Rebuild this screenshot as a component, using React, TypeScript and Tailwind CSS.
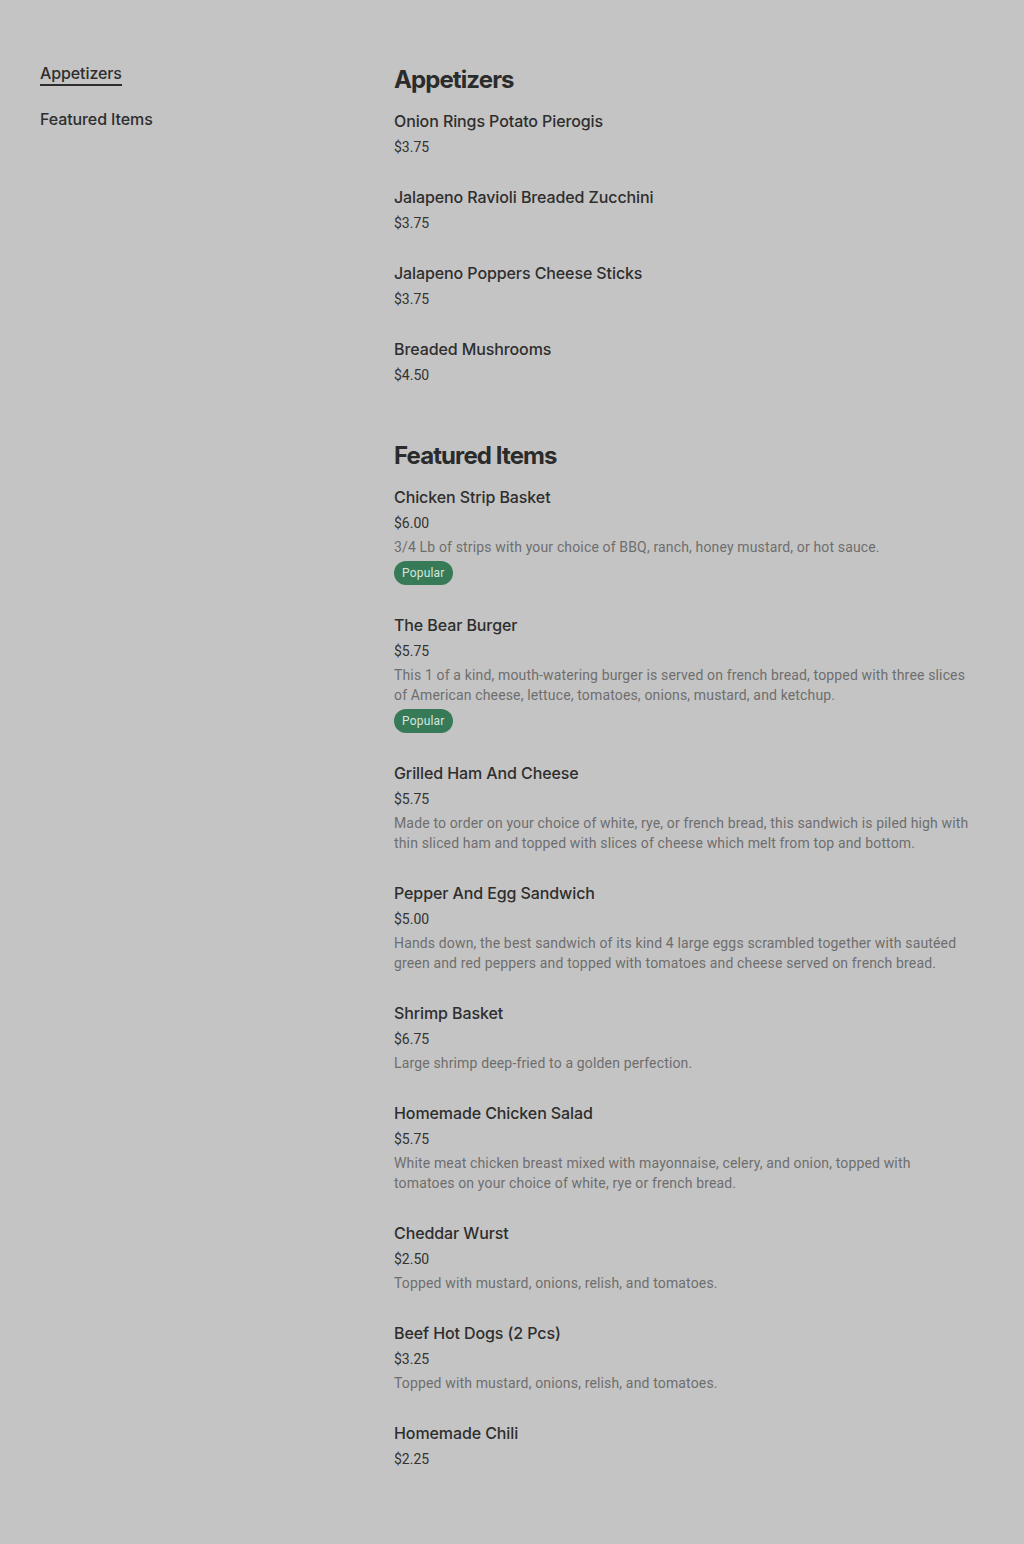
import React from "react";

type Item = { name: string; price: string; desc?: string; popular?: boolean };

const appetizers: Item[] = [
  { name: "Onion Rings Potato Pierogis", price: "$3.75" },
  { name: "Jalapeno Ravioli Breaded Zucchini", price: "$3.75" },
  { name: "Jalapeno Poppers Cheese Sticks", price: "$3.75" },
  { name: "Breaded Mushrooms", price: "$4.50" },
];

const featured: Item[] = [
  {
    name: "Chicken Strip Basket",
    price: "$6.00",
    desc: "3/4 Lb of strips with your choice of BBQ, ranch, honey mustard, or hot sauce.",
    popular: true,
  },
  {
    name: "The Bear Burger",
    price: "$5.75",
    desc: "This 1 of a kind, mouth-watering burger is served on french bread, topped with three slices of American cheese, lettuce, tomatoes, onions, mustard, and ketchup.",
    popular: true,
  },
  {
    name: "Grilled Ham And Cheese",
    price: "$5.75",
    desc: "Made to order on your choice of white, rye, or french bread, this sandwich is piled high with thin sliced ham and topped with slices of cheese which melt from top and bottom.",
  },
  {
    name: "Pepper And Egg Sandwich",
    price: "$5.00",
    desc: "Hands down, the best sandwich of its kind 4 large eggs scrambled together with sautéed green and red peppers and topped with tomatoes and cheese served on french bread.",
  },
  {
    name: "Shrimp Basket",
    price: "$6.75",
    desc: "Large shrimp deep-fried to a golden perfection.",
  },
  {
    name: "Homemade Chicken Salad",
    price: "$5.75",
    desc: "White meat chicken breast mixed with mayonnaise, celery, and onion, topped with tomatoes on your choice of white, rye or french bread.",
  },
  {
    name: "Cheddar Wurst",
    price: "$2.50",
    desc: "Topped with mustard, onions, relish, and tomatoes.",
  },
  {
    name: "Beef Hot Dogs (2 Pcs)",
    price: "$3.25",
    desc: "Topped with mustard, onions, relish, and tomatoes.",
  },
  { name: "Homemade Chili", price: "$2.25" },
];

const inter = { fontFamily: "Inter, 'Noto Sans', sans-serif" };

function MenuItem({ item }: { item: Item }) {
  return (
    <div className="flex flex-col">
      <div className="text-[16px] leading-6 font-medium tracking-[-0.1px] text-[#2e2e2e]" style={inter}>
        {item.name}
      </div>
      <div className="mt-[4px] text-[14px] leading-5 text-[#333333]">{item.price}</div>
      {item.desc && (
        <div className="mt-[4px] text-[14px] leading-5 tracking-[0.15px] text-[#6e6e6e]">{item.desc}</div>
      )}
      {item.popular && (
        <div className="mt-[4px] flex">
          <span className="rounded-full bg-[#367a58] px-2 h-[24px] flex items-center text-[12px] tracking-[0.2px] text-[#d6e6dc]">
            Popular
          </span>
        </div>
      )}
    </div>
  );
}

function Section({ title, items }: { title: string; items: Item[] }) {
  return (
    <section className="flex flex-col">
      <h2 className="text-[24px] leading-8 font-bold tracking-[-0.9px] text-[#2b2b2b]" style={inter}>
        {title}
      </h2>
      <div className="mt-[13px] flex flex-col gap-[28px]">
        {items.map((it) => (
          <MenuItem key={it.name} item={it} />
        ))}
      </div>
    </section>
  );
}

export default function App() {
  return (
    <div
      className="min-h-screen bg-[#c4c4c4] px-10 pt-[64px] pb-[76px]"
      style={{ fontFamily: "Roboto, 'Noto Sans', sans-serif" }}
    >
      <div className="flex gap-10">
        <nav className="w-[314px] shrink-0 flex flex-col gap-[21px] -mt-[2px]" style={inter}>
          <a className="self-start text-[16px] leading-[22px] font-medium tracking-[-0.1px] text-[#2e2e2e] border-b-2 border-[#2e2e2e]">
            Appetizers
          </a>
          <a className="self-start text-[16px] leading-6 font-medium tracking-[-0.1px] text-[#2e2e2e]">
            Featured Items
          </a>
        </nav>
        <main className="w-[580px] flex flex-col gap-[55px]">
          <Section title="Appetizers" items={appetizers} />
          <Section title="Featured Items" items={featured} />
        </main>
      </div>
    </div>
  );
}
